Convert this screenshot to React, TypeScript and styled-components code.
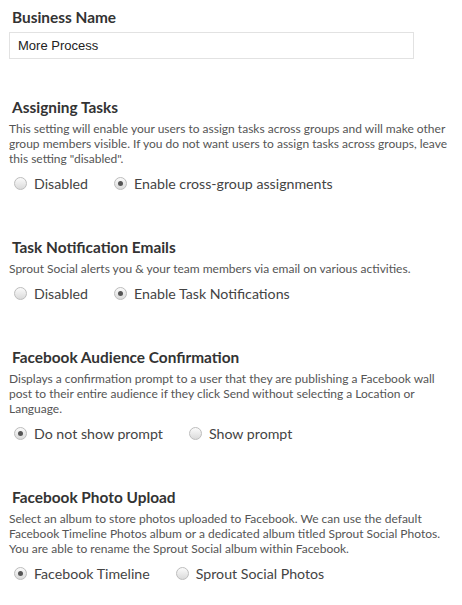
import styled, {createGlobalStyle} from 'styled-components';

const GlobalStyle = createGlobalStyle`
  body {
    margin: 0;
    background: #fff;
    font-family: Lato, "Open Sans", sans-serif;
  }`

const Page = styled.div`
  width: 462px;
  padding: 8px 0 0 9px;
  box-sizing: border-box;`

const Section = styled.section<{space?: number}>`
  margin-bottom: ${(p) => p.space ?? 45}px;`

const Heading = styled.h3`
  margin: 0 0 0 3px;
  font-size: 15.4px;
  line-height: 18px;
  font-weight: 700;
  color: #333;`

const NameInput = styled.input`
  display: block;
  width: 405px;
  height: 27px;
  margin-top: 6px;
  padding: 0 8px;
  box-sizing: border-box;
  border: 1px solid #e2e2e2;
  font-family: "Liberation Sans", Arial, sans-serif;
  font-size: 13px;
  color: #222;
  outline: none;`

const Description = styled.p`
  margin: 5px 0 0 0;
  width: 441px;
  font-size: 12px;
  line-height: 15px;
  color: #555;`

const Options = styled.div`
  display: flex;
  align-items: center;
  gap: 26px;
  height: 20px;
  margin: 7px 0 0 5px;`

const Option = styled.label`
  display: flex;
  align-items: center;
  gap: 7px;
  font-size: 14.2px;
  color: #444;
  cursor: pointer;`

const Dot = styled.span<{checked?: boolean}>`
  position: relative;
  width: 11px;
  height: 11px;
  border-radius: 50%;
  border: 1px solid #bdbdbd;
  background: linear-gradient(#fbfbfb, #dadada);
  &::after {
    content: "";
    display: ${(p) => (p.checked ? 'block' : 'none')};
    position: absolute;
    left: 3px;
    top: 3px;
    width: 5px;
    height: 5px;
    border-radius: 50%;
    background: #555;
  }`

type Setting = {
  title: string
  text: string
  choices: string[]
  picked: number
}

const settings: Setting[] = [
  {
    title: 'Assigning Tasks',
    text: 'This setting will enable your users to assign tasks across groups and will make other group members visible. If you do not want users to assign tasks across groups, leave this setting "disabled".',
    choices: ['Disabled', 'Enable cross-group assignments'],
    picked: 1,
  },
  {
    title: 'Task Notification Emails',
    text: 'Sprout Social alerts you & your team members via email on various activities.',
    choices: ['Disabled', 'Enable Task Notifications'],
    picked: 1,
  },
  {
    title: 'Facebook Audience Confirmation',
    text: 'Displays a confirmation prompt to a user that they are publishing a Facebook wall post to their entire audience if they click Send without selecting a Location or Language.',
    choices: ['Do not show prompt', 'Show prompt'],
    picked: 0,
  },
  {
    title: 'Facebook Photo Upload',
    text: 'Select an album to store photos uploaded to Facebook. We can use the default Facebook Timeline Photos album or a dedicated album titled Sprout Social Photos. You are able to rename the Sprout Social album within Facebook.',
    choices: ['Facebook Timeline', 'Sprout Social Photos'],
    picked: 0,
  },
]

const App = () => {
  return (
    <Page>
      <GlobalStyle/>
      <Section space={39}>
        <Heading>Business Name</Heading>
        <NameInput defaultValue="More Process"/>
      </Section>
      {settings.map((s) => (
        <Section key={s.title}>
          <Heading>{s.title}</Heading>
          <Description>{s.text}</Description>
          <Options>
            {s.choices.map((c, i) => (
              <Option key={c}>
                <Dot checked={i === s.picked}/>
                {c}
              </Option>
            ))}
          </Options>
        </Section>
      ))}
    </Page>
  );
}

export default App
